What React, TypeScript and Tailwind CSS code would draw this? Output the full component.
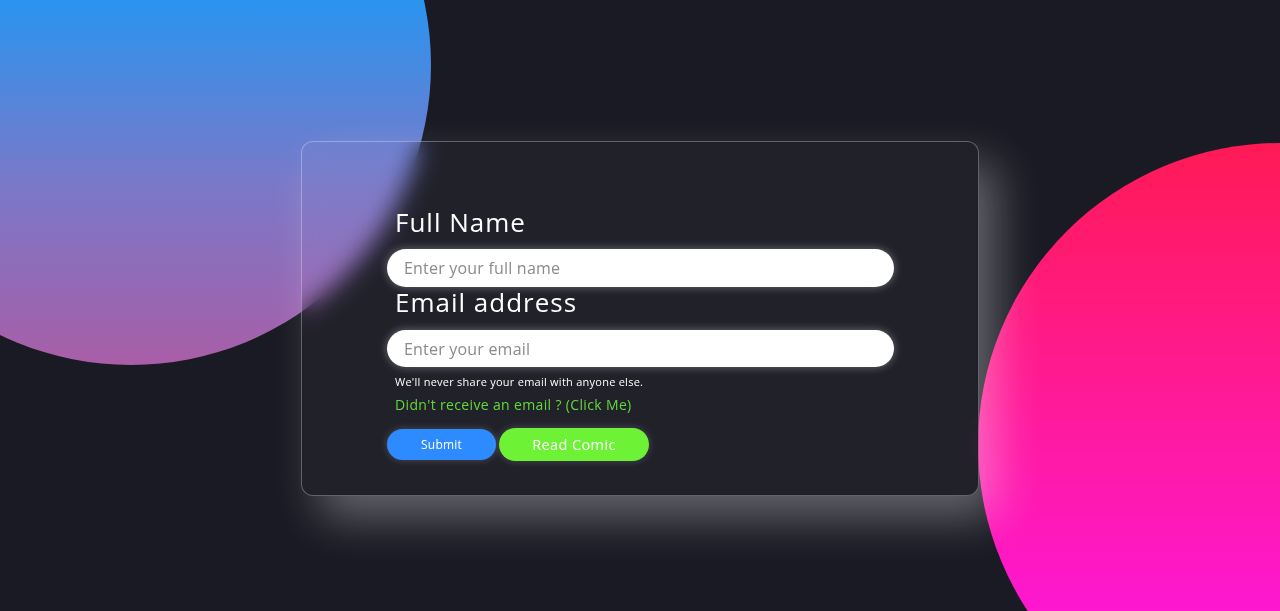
import React from "react";

const font = { fontFamily: '"Open Sans", "Liberation Sans", sans-serif' };

export default function App() {
  return (
    <div
      className="relative w-full h-[611px] overflow-hidden bg-[#1a1a24] flex flex-col"
      style={font}
    >
      {/* background blobs */}
      <div className="absolute left-[-169px] top-[-235px] w-[600px] h-[600px] rounded-full bg-[linear-gradient(to_bottom,#1f98f5_35%,#7a78c8_70%,#a95ea7_100%)]" />
      <div className="absolute left-[978px] top-[143px] w-[604px] h-[604px] rounded-full bg-[linear-gradient(to_bottom,#ff1a55_0%,#ff1a9c_45%,#fc17f6_100%)]" />

      {/* card */}
      <div className="relative ml-[301px] mt-[141px] w-[678px] h-[355px] rounded-[12px] border border-white/30 bg-white/[0.03] backdrop-blur-[12px] shadow-[18px_22px_45px_rgba(255,255,255,0.32)] pl-[85px] pt-[65px]">
        <div className="w-[507px] flex flex-col">
          <label className="pl-2 text-[26px] leading-[30px] tracking-[1px] text-white">Full Name</label>
          <input
            className="mt-[12px] h-[38px] w-full rounded-full bg-white px-[17px] text-[16px] tracking-[0.2px] text-gray-700 placeholder:text-[#8a8a8a] outline-none shadow-[0_0_10px_rgba(255,255,255,0.35)]"
            placeholder="Enter your full name"
          />
          <label className="pl-2 text-[26px] leading-[30px] tracking-[1px] text-white">Email address</label>
          <input
            className="mt-[13px] h-[37px] w-full rounded-full bg-white px-[17px] text-[16px] tracking-[0.2px] text-gray-700 placeholder:text-[#8a8a8a] outline-none shadow-[0_0_10px_rgba(255,255,255,0.35)]"
            placeholder="Enter your email"
          />
          <p className="pl-2 mt-[8px] text-[11px] leading-[14px] tracking-[0.25px] text-white">
            We'll never share your email with anyone else.
          </p>
          <a className="pl-2 mt-[7px] text-[14px] leading-[18px] tracking-[0.35px] text-[#63d93a] cursor-pointer">
            Didn't receive an email ? (Click Me)
          </a>
          <div className="mt-[14px] flex items-center gap-[3px]">
            <button className="h-[31px] w-[109px] rounded-full bg-[#2e8bff] text-[12px] tracking-[0.2px] text-white shadow-[0_0_8px_rgba(255,255,255,0.2)]">
              Submit
            </button>
            <button className="h-[33px] w-[150px] rounded-full bg-[#6ef236] text-[14.5px] tracking-[0.4px] text-white shadow-[0_0_8px_rgba(255,255,255,0.2)]">
              Read Comic
            </button>
          </div>
        </div>
      </div>
    </div>
  );
}
